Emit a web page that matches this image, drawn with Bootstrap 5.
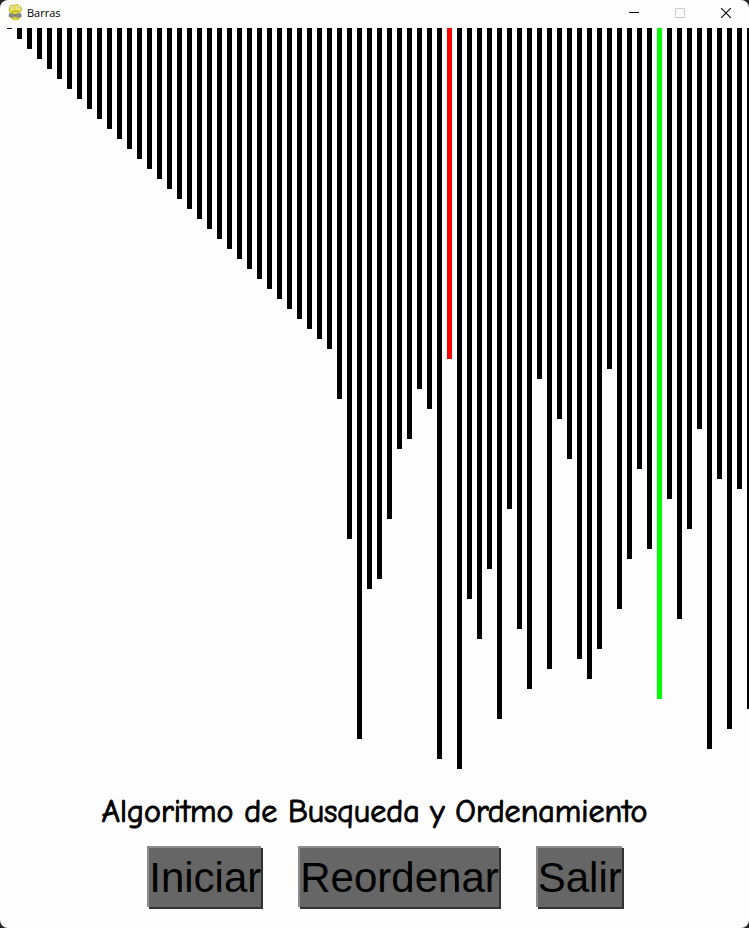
<!DOCTYPE html>
<html lang="es">
<head>
<meta charset="utf-8">
<meta name="viewport" content="width=device-width, initial-scale=1">
<title>Barras</title>
<link href="https://cdn.jsdelivr.net/npm/bootstrap@5.3.0/dist/css/bootstrap.min.css" rel="stylesheet">
<style>
body { background: #222; }
.app-window { background: #fefefe; border-radius: 8px; font-family: "Open Sans", "Noto Sans", sans-serif; }
.title-bar { height: 28px; font-size: 11px; line-height: 16px; color: #000; padding-bottom: 3px; }
.title-bar h1 { font: inherit; }
.win-btn { width: 46px; height: 24px; }
.bars { height: 742px; gap: 5px; padding-left: 7px; }
.bar { width: 5px; background: #000; }
.bar-current { background: #f00; }
.bar-compare { background: #0f0; }
.caption { font-family: "Comic Sans MS", "Comic Neue", Lato, sans-serif; font-size: 32px; line-height: 40px; color: #000; -webkit-text-stroke: 1px #000; margin-top: 22px; }
.actions { gap: 37px; margin-top: 14px; padding: 0 0 19px 20px; }
.tool-btn { background: #666; border: solid #8c8c8c; border-width: 2px 0 0 2px; box-shadow: 2px 2px 0 #333; color: #000; font-family: "Liberation Sans", Arial, sans-serif; font-size: 42px; line-height: 59px; height: 61px; padding: 0; }
</style>
<script src="https://cdn.jsdelivr.net/npm/bootstrap@5.3.0/dist/js/bootstrap.bundle.min.js"></script>
</head>
<body>
<div class="app-window d-flex flex-column min-vh-100 overflow-hidden">
  <header class="title-bar d-flex align-items-center flex-shrink-0">
    <svg class="ms-2 flex-shrink-0" width="15" height="17" viewBox="0 0 15 17" aria-hidden="true">
      <path d="M1.500 3.500C2 1 4 .5 6 1.500 8 .3 11 .5 12 2.500c1.800.5 1.800 3.500.8 5L10 9.500H4.500L1.500 8Z" fill="#eadf3a" stroke="#a99d22" stroke-width=".7"/>
      <circle cx="4.500" cy="3.700" r="1.800" fill="#faf8d0"/><circle cx="9.700" cy="3.700" r="1.800" fill="#faf8d0"/>
      <circle cx="4.700" cy="3.800" r=".6" fill="#444"/><circle cx="9.700" cy="3.800" r=".6" fill="#444"/>
      <path d="M4 7.300h7" stroke="#8d8325" stroke-width=".7"/>
      <path d="M4 9h7l1.500 3.500-1.500 3.500H4.500L2.500 13Z" fill="#dccf35"/>
      <path d="M.8 9.500 4 8.800l3 2 3-2 3.500 1v3.400L10 14.200l-3-1.500-3 1.500-3.200-1.200Z" fill="#909087"/>
      <path d="M5.500 11h3M2 10.500v2M12 10.500v2" stroke="#66665e"/>
    </svg>
    <h1 class="mb-0 ms-1">Barras</h1>
    <div class="d-flex ms-auto">
      <button type="button" class="win-btn btn p-0 border-0 d-flex align-items-center justify-content-center" aria-label="Minimizar">
        <svg width="10" height="10" viewBox="0 0 10 10"><path d="M0 4.500h10" stroke="#000"/></svg>
      </button>
      <button type="button" class="win-btn btn p-0 border-0 opacity-100 d-flex align-items-center justify-content-center" aria-label="Maximizar" disabled>
        <svg width="10" height="10" viewBox="0 0 10 10"><path d="M.5.5h9v9h-9z" fill="none" stroke="#ccc"/></svg>
      </button>
      <button type="button" class="win-btn btn p-0 border-0 d-flex align-items-center justify-content-center" aria-label="Cerrar">
        <svg width="10" height="10" viewBox="0 0 10 10"><path d="M0 0l10 10M10 0L0 10" stroke="#000" stroke-width="1.100"/></svg>
      </button>
    </div>
  </header>
  <main>
    <div class="bars d-flex align-items-start overflow-hidden" id="bars" role="img" aria-label="Barras"></div>
    <h2 class="caption text-center mb-0 fw-normal">Algoritmo de Busqueda y Ordenamiento</h2>
    <div class="actions d-flex flex-wrap justify-content-center">
      <button type="button" class="tool-btn">Iniciar</button>
      <button type="button" class="tool-btn">Reordenar</button>
      <button type="button" class="tool-btn">Salir</button>
    </div>
  </main>
</div>
<script>
const sorted = Array.from({ length: 33 }, (_, i) => i);
const pending = [37, 51, 71, 56, 55, 49, 42, 41, 36, 38, 73, 33, 74, 57, 61, 54, 69, 48, 60, 66, 35,
  64, 39, 43, 63, 65, 62, 34, 58, 53, 44, 52, 67, 47, 59, 50, 40, 72, 45, 70, 46, 68];
const current = 44, compare = 65;
const chart = document.getElementById('bars');
sorted.concat(pending).forEach((value, i) => {
  const bar = document.createElement('div');
  bar.className = 'bar flex-shrink-0' + (i === current ? ' bar-current' : i === compare ? ' bar-compare' : '');
  bar.style.height = (value * 10 + 1) + 'px';
  chart.append(bar);
});
</script>
</body>
</html>
